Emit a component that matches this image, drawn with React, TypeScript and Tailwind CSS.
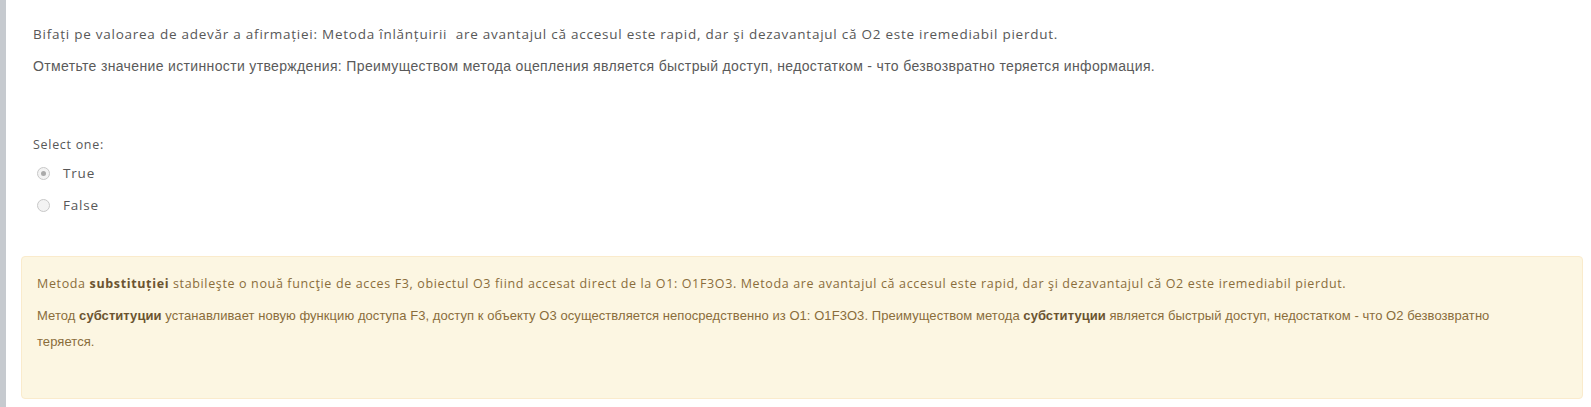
export default function App() {
  return (
    <div className="flex h-[407px] w-[1591px] overflow-hidden bg-white">
      <div className="w-[6px] shrink-0 bg-[#c6cacf]" />
      <main className="flex-1 pl-[27px] pr-[8px] pt-[24px] text-[#585858]">
        <p className="font-['Open_Sans'] text-[13.5px] tracking-[0.75px] leading-[20px] mb-[12px]">
          Bifați pe valoarea de adevăr a afirmației: Metoda înlănțuirii&nbsp; are avantajul că accesul este rapid, dar şi dezavantajul că O2 este iremediabil pierdut.
        </p>
        <p className="font-['Liberation_Sans'] text-[14px] tracking-[0.35px] leading-[20px] text-[#5a5a5a]">
          Отметьте значение истинности утверждения: Преимуществом метода оцепления является быстрый доступ, недостатком - что безвозвратно теряется информация.
        </p>

        <div className="mt-[59px] font-['Open_Sans']">
          <div className="text-[12.5px] tracking-[0.7px] leading-[20px]">Select one:</div>
          <label className="mt-[8px] flex items-center text-[13.5px] tracking-[0.8px] leading-[20px]">
            <span className="ml-[4px] mr-[13px] flex h-[13px] w-[13px] items-center justify-center rounded-full border border-[#c8c8c8] bg-[#f3f3f3]">
              <span className="h-[5px] w-[5px] rounded-full bg-[#aaaaaa]" />
            </span>
            True
          </label>
          <label className="mt-[12px] flex items-center text-[13.5px] tracking-[0.8px] leading-[20px]">
            <span className="ml-[4px] mr-[13px] h-[13px] w-[13px] rounded-full border border-[#c8c8c8] bg-[#f3f3f3]" />
            False
          </label>
        </div>

        <div className="-ml-[12px] mt-[41px] h-[143px] rounded-[4px] border border-[#faebcc] bg-[#fcf6e2] pl-[15px] pr-[36px] pt-[17px] text-[#8a6d3b]">
          <p className="font-['Open_Sans'] text-[12.5px] tracking-[0.64px] leading-[20px] mb-[9px]">
            Metoda <b className="text-[#6b5430]">substituției</b> stabileşte o nouă funcţie de acces F3, obiectul O3 fiind accesat direct de la O1: O1F3O3. Metoda are avantajul că accesul este rapid, dar şi dezavantajul că O2 este iremediabil pierdut.
          </p>
          <p className="font-['Liberation_Sans'] text-[13px] tracking-[0.06px] leading-[26px]">
            Метод <b className="text-[#6b5430]">субституции</b> устанавливает новую функцию доступа F3, доступ к объекту O3 осуществляется непосредственно из O1: O1F3O3. Преимуществом метода <b className="text-[#6b5430]">субституции</b> является быстрый доступ, недостатком - что O2 безвозвратно теряется.
          </p>
        </div>
      </main>
    </div>
  );
}
